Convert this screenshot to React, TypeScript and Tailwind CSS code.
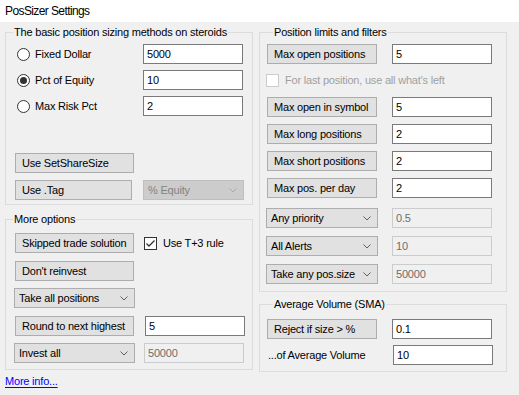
import type { ReactNode } from "react";

function Btn({ children, w = "w-[119px]", className = "" }: { children: ReactNode; w?: string; className?: string }) {
    return (
        <div className={`${w} h-[20px] shrink-0 border border-[#adadad] bg-[#e1e1e1] pl-[6px] leading-[18px] whitespace-nowrap ${className}`}>
            {children}
        </div>
    );
}

function TextBox({ value, disabled = false, className = "" }: { value: string; disabled?: boolean; className?: string }) {
    return (
        <div
            className={`w-[100px] h-[20px] shrink-0 border pl-[3px] leading-[18px] ${
                disabled ? "border-[#cccccc] bg-[#f0f0f0] text-[#6d6d6d]" : "border-[#7a7a7a] bg-white"
            } ${className}`}
        >
            {value}
        </div>
    );
}

function Chevron({ color = "#606060" }: { color?: string }) {
    return (
        <svg width="8" height="5" viewBox="0 0 8 5" className="shrink-0">
            <path d="M0.5 0.5 L4 4 L7.5 0.5" fill="none" stroke={color} strokeWidth="1" />
        </svg>
    );
}

function Combo({ label, w = "w-[121px]", disabled = false }: { label: string; w?: string; disabled?: boolean }) {
    return (
        <div
            className={`${w} h-[20px] shrink-0 border flex items-center justify-between pl-[4px] pr-[6px] whitespace-nowrap ${
                disabled ? "border-[#bfbfbf] bg-[#cccccc] text-[#838383]" : "border-[#adadad] bg-[#e1e1e1]"
            }`}
        >
            <span>{label}</span>
            <Chevron color={disabled ? "#a8a8a8" : "#606060"} />
        </div>
    );
}

function Radio({ label, checked = false }: { label: string; checked?: boolean }) {
    return (
        <div className="flex items-center gap-[5px] ml-[11px]">
            <span className="w-[13px] h-[13px] rounded-full border border-[#333333] bg-white flex items-center justify-center">
                {checked && <span className="w-[7px] h-[7px] rounded-full bg-[#333333]" />}
            </span>
            <span>{label}</span>
        </div>
    );
}

function Check({ label, checked = false, disabled = false }: { label: string; checked?: boolean; disabled?: boolean }) {
    return (
        <div className={`flex items-center gap-[6px] ${disabled ? "text-[#a0a0a0]" : ""}`}>
            <span
                className={`w-[13px] h-[13px] border bg-white flex items-center justify-center ${
                    disabled ? "border-[#cccccc]" : "border-[#333333]"
                }`}
            >
                {checked && (
                    <svg width="11" height="11" viewBox="0 0 11 11">
                        <path d="M1.5 5.5 L4 8 L9.5 2.5" fill="none" stroke="#333333" strokeWidth="1.3" />
                    </svg>
                )}
            </span>
            <span>{label}</span>
        </div>
    );
}

function Group({ title, children, className = "" }: { title: string; children: ReactNode; className?: string }) {
    return (
        <fieldset className={`border border-[#dcdcdc] ${className}`}>
            <legend className="ml-[7px] px-[1px] leading-[13px]">{title}</legend>
            {children}
        </fieldset>
    );
}

export default function App() {
    return (
        <div className="w-[519px] h-[395px] bg-[#f0f0f0] text-black text-[11px] tracking-[-0.2px] font-['Liberation_Sans',Arial,sans-serif] overflow-hidden">

            {/* TITLE */}
            <div className="h-[22px] bg-white pl-[5px] text-[12px] tracking-[-0.6px] leading-[22px]">PosSizer Settings</div>

            <div className="flex gap-[6px] pl-[5px] pt-[4px]">

                {/* LEFT COLUMN */}
                <div className="w-[248px] flex flex-col">
                    <Group title="The basic position sizing methods on steroids" className="pb-[4px]">
                        <div className="flex items-center justify-between h-[20px] mt-[5px] pr-[9px]">
                            <Radio label="Fixed Dollar" />
                            <TextBox value="5000" />
                        </div>
                        <div className="flex items-center justify-between h-[20px] mt-[6px] pr-[9px]">
                            <Radio label="Pct of Equity" checked />
                            <TextBox value="10" />
                        </div>
                        <div className="flex items-center justify-between h-[20px] mt-[6px] pr-[9px]">
                            <Radio label="Max Risk Pct" />
                            <TextBox value="2" />
                        </div>
                        <div className="mt-[37px] pl-[9px]">
                            <Btn>Use SetShareSize</Btn>
                        </div>
                        <div className="flex items-center justify-between mt-[7px] pl-[9px] pr-[8px]">
                            <Btn w="w-[117px]">Use .Tag</Btn>
                            <Combo label="% Equity" w="w-[101px]" disabled />
                        </div>
                    </Group>

                    <Group title="More options" className="mt-[8px] pb-[6px]">
                        <div className="flex items-center gap-[10px] mt-[7px] pl-[9px]">
                            <Btn>Skipped trade solution</Btn>
                            <Check label="Use T+3 rule" checked />
                        </div>
                        <div className="mt-[8px] pl-[9px]">
                            <Btn>Don't reinvest</Btn>
                        </div>
                        <div className="mt-[7px] pl-[8px]">
                            <Combo label="Take all positions" />
                        </div>
                        <div className="flex items-center justify-between mt-[8px] pl-[9px] pr-[7px]">
                            <Btn>Round to next highest</Btn>
                            <TextBox value="5" />
                        </div>
                        <div className="flex items-center justify-between mt-[7px] pl-[8px] pr-[8px]">
                            <Combo label="Invest all" />
                            <TextBox value="50000" disabled />
                        </div>
                    </Group>

                    <a className="mt-[5px] text-[#0000ff] underline underline-offset-[2px] leading-[13px] w-fit">More info...</a>
                </div>

                {/* RIGHT COLUMN */}
                <div className="w-[248px] flex flex-col">
                    <Group title="Position limits and filters" className="pb-[7px] px-[6px]">
                        <div className="flex items-center justify-between mt-[5px] pr-[8px] pl-[1px]">
                            <Btn w="w-[110px]">Max open positions</Btn>
                            <TextBox value="5" />
                        </div>
                        <div className="flex items-center h-[20px] mt-[6px]">
                            <Check label="For last position, use all what's left" disabled />
                        </div>
                        <div className="flex items-center justify-between mt-[7px] pr-[8px] pl-[1px]">
                            <Btn w="w-[110px]">Max open in symbol</Btn>
                            <TextBox value="5" />
                        </div>
                        <div className="flex items-center justify-between mt-[7px] pr-[8px] pl-[1px]">
                            <Btn w="w-[110px]">Max long positions</Btn>
                            <TextBox value="2" />
                        </div>
                        <div className="flex items-center justify-between mt-[7px] pr-[8px] pl-[1px]">
                            <Btn w="w-[110px]">Max short positions</Btn>
                            <TextBox value="2" />
                        </div>
                        <div className="flex items-center justify-between mt-[7px] pr-[8px] pl-[1px]">
                            <Btn w="w-[110px]">Max pos. per day</Btn>
                            <TextBox value="2" />
                        </div>
                        <div className="flex items-center justify-between mt-[10px] pr-[8px]">
                            <Combo label="Any priority" w="w-[112px]" />
                            <TextBox value="0.5" disabled />
                        </div>
                        <div className="flex items-center justify-between mt-[8px] pr-[8px]">
                            <Combo label="All Alerts" w="w-[112px]" />
                            <TextBox value="10" disabled />
                        </div>
                        <div className="flex items-center justify-between mt-[8px] pr-[8px]">
                            <Combo label="Take any pos.size" w="w-[112px]" />
                            <TextBox value="50000" disabled />
                        </div>
                    </Group>

                    <Group title="Average Volume (SMA)" className="mt-[6px] pb-[6px] px-[6px]">
                        <div className="flex items-center justify-between mt-[8px] pr-[8px] pl-[1px]">
                            <Btn w="w-[110px]">Reject if size &gt; %</Btn>
                            <TextBox value="0.1" />
                        </div>
                        <div className="flex items-center justify-between mt-[6px] pr-[7px] pl-[2px]">
                            <span>...of Average Volume</span>
                            <TextBox value="10" />
                        </div>
                    </Group>
                </div>
            </div>
        </div>
    );
}
